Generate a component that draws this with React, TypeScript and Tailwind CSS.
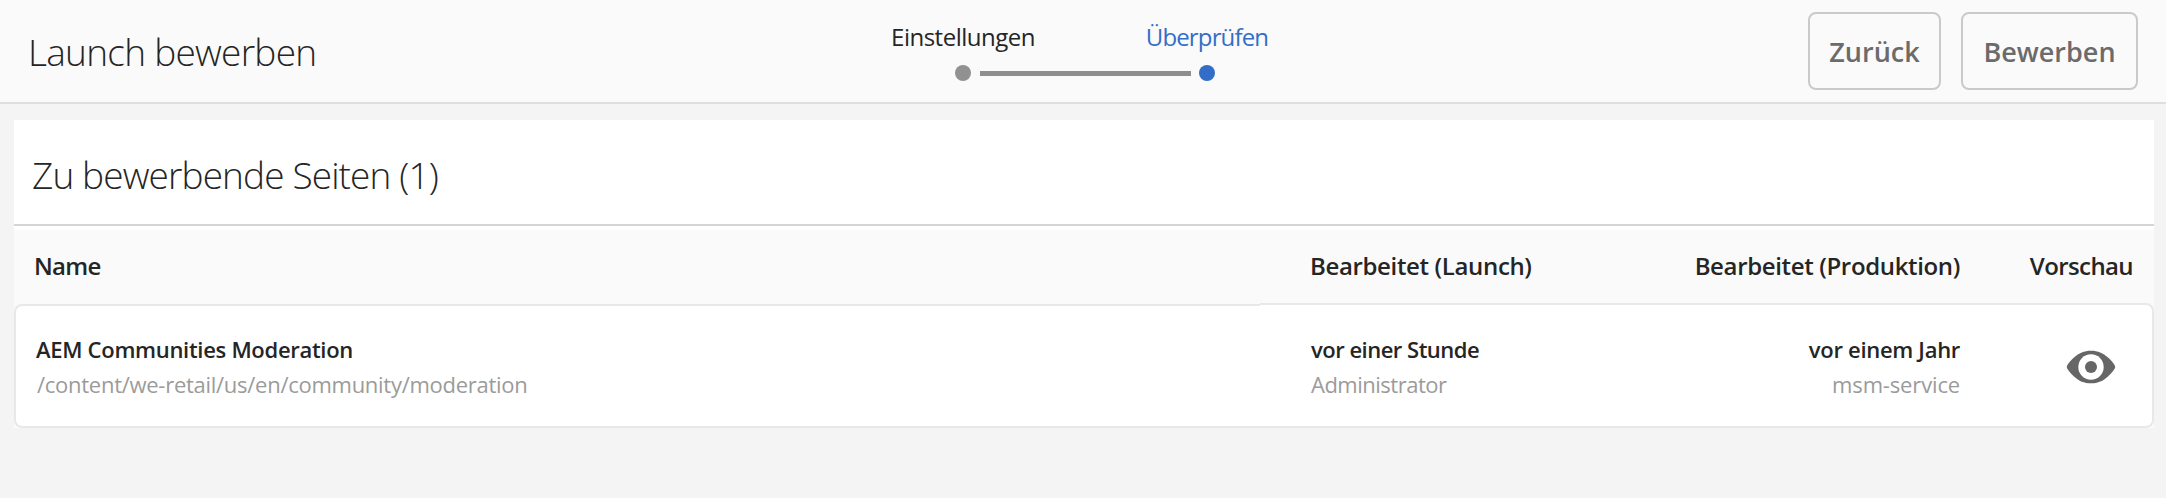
function PreviewIcon() {
  return (
    <svg width="50" height="34" viewBox="0 0 50 34" aria-hidden="true">
      <path
        d="M0.8 17C0.8 15.2 4 11.2 8 7.6C13 3 18 0.8 25 0.8S37 3 42 7.6C46 11.2 49.2 15.2 49.2 17S46 22.8 42 26.4C37 31 32 33.2 25 33.2S13 31 8 26.4C4 22.8 0.8 18.8 0.8 17Z"
        fill="#666666"
      />
      <circle cx="25" cy="17" r="12.7" fill="#ffffff" />
      <circle cx="25" cy="17" r="6" fill="#666666" />
    </svg>
  );
}

function Header() {
  return (
    <header className="flex h-[104px] border-b-2 border-[#dedede] bg-[#fafafa]">
      <div className="flex w-[841px] items-center pt-[2px] pl-[28px]">
        <h1 className="text-[37px] font-light tracking-[-0.73px]">Launch bewerben</h1>
      </div>
      <div className="w-[488px] pt-[22px]">
        <div className="grid grid-cols-2 text-center text-[24px] leading-[30px]">
          <span className="tracking-[-0.5px]">Einstellungen</span>
          <span className="tracking-[-0.85px] text-[#326ec8]">Überprüfen</span>
        </div>
        <div className="mt-[13px] flex items-center px-[114px]">
          <span className="size-4 rounded-full bg-[#919191]" />
          <span className="mr-2 ml-[9px] h-[5px] flex-1 bg-[#8e8e8e]" />
          <span className="size-4 rounded-full bg-[#326ec8]" />
        </div>
      </div>
      <div className="flex flex-1 justify-end gap-5 pt-3 pr-7 text-[27px] font-semibold text-[#6b6b6b]">
        <button className="h-[78px] w-[133px] rounded-lg border-2 border-[#cacaca] pt-[3px]">Zurück</button>
        <button className="h-[78px] w-[177px] rounded-lg border-2 border-[#cacaca] pt-[3px]">Bewerben</button>
      </div>
    </header>
  );
}

export default function App() {
  return (
    <div className="h-[498px] w-[2166px] bg-[#f4f4f4] font-['Open_Sans',sans-serif] whitespace-nowrap text-[#252525]">
      <Header />
      <main className="mt-4 mr-3 ml-[14px] bg-[#fafafa]">
        <div className="flex h-[106px] items-center border-b-2 border-[#d5d5d5] bg-white pt-[5px] pl-[18px]">
          <h2 className="text-[37px] font-light tracking-[-0.88px]">Zu bewerbende Seiten (1)</h2>
        </div>
        <div className="h-1 bg-white" />
        <div className="flex h-[73px] items-center pb-[2px] text-[24px] font-semibold">
          <div className="w-[1246px] pl-5 tracking-[-0.7px]">Name</div>
          <div className="w-[350px] pl-[50px] tracking-[-0.35px]">Bearbeitet (Launch)</div>
          <div className="w-[350px] text-right tracking-[-0.35px]">Bearbeitet (Produktion)</div>
          <div className="flex-1 pr-[21px] text-right tracking-[-0.6px]">Vorschau</div>
        </div>
        <div className="flex h-[125px] items-end text-[22px] leading-[35px]">
          <div className="h-[124px] w-[1246px] rounded-l-lg border-2 border-r-0 border-[#e8e8e8] bg-white pt-[26px] pl-5">
            <div className="font-semibold tracking-[-0.3px]">AEM Communities Moderation</div>
            <div className="pl-px tracking-[-0.27px] text-[#9b9b9b]">/content/we-retail/us/en/community/moderation</div>
          </div>
          <div className="flex h-[125px] flex-1 rounded-r-lg border-2 border-l-0 border-[#e8e8e8] bg-white">
            <div className="w-[350px] pt-[27px] pl-[51px]">
              <div className="font-semibold tracking-[-0.5px]">vor einer Stunde</div>
              <div className="tracking-[-0.5px] text-[#9b9b9b]">Administrator</div>
            </div>
            <div className="w-[350px] pt-[27px] text-right">
              <div className="font-semibold tracking-[-0.3px]">vor einem Jahr</div>
              <div className="tracking-[-0.15px] text-[#9b9b9b]">msm-service</div>
            </div>
            <div className="flex flex-1 justify-end pt-[45px] pr-9">
              <PreviewIcon />
            </div>
          </div>
        </div>
      </main>
    </div>
  );
}
